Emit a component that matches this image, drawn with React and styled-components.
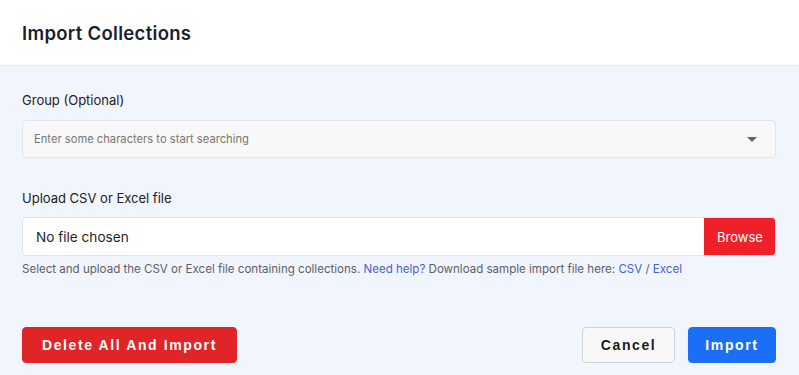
import React from "react";
import styled, { createGlobalStyle } from "styled-components";

const Global = createGlobalStyle`
  html, body { margin: 0; padding: 0; }
  body {
    width: 799px;
    height: 375px;
    overflow: hidden;
    background: #f1f5fe;
    font-family: "Inter", "Open Sans", sans-serif;
  }
`;

export default function App() {
  return (
    <Modal>
      <Global />
      <Header>
        <Title>Import Collections</Title>
      </Header>
      <Body>
        <Field>
          <Label>Group (Optional)</Label>
          <Select>
            <Placeholder>Enter some characters to start searching</Placeholder>
            <Caret />
          </Select>
        </Field>
        <Field>
          <Label tight>Upload CSV or Excel file</Label>
          <FileInput>
            <FileName>No file chosen</FileName>
            <Browse>Browse</Browse>
          </FileInput>
          <Help>
            Select and upload the CSV or Excel file containing collections.{" "}
            <Link>Need help?</Link> Download sample import file here:{" "}
            <Link>CSV</Link> / <Link>Excel</Link>
          </Help>
        </Field>
        <Footer>
          <Button variant="danger">Delete All And Import</Button>
          <Actions>
            <Button variant="light">Cancel</Button>
            <Button variant="primary">Import</Button>
          </Actions>
        </Footer>
      </Body>
    </Modal>
  );
}

const Modal = styled.div`
  width: 799px;
  height: 375px;
  display: flex;
  flex-direction: column;
  background: #f1f5fe;
`;

const Header = styled.div`
  height: 66px;
  background: #fff;
  border-bottom: 1px solid #e2e6ee;
  display: flex;
  align-items: center;
  padding: 0 22px;
  box-sizing: border-box;
`;

const Title = styled.h2`
  margin: 0;
  font-size: 18.5px;
  font-weight: 600;
  color: #1b1e2e;
  letter-spacing: 0.3px;
`;

const Body = styled.div`
  flex: 1;
  display: flex;
  flex-direction: column;
  padding: 26px 23px 12px 22px;
`;

const Field = styled.div`
  display: flex;
  flex-direction: column;
  margin-bottom: 32px;
  &:last-of-type { margin-bottom: 0; }
`;

const Label = styled.label`
  font-size: 13px;
  line-height: 16px;
  color: #222;
  margin-bottom: ${(p) => (p.tight ? "11px" : "12px")};
`;

const Select = styled.div`
  height: 38px;
  box-sizing: border-box;
  background: #f8f8f8;
  border: 1px solid #e1e4ec;
  border-radius: 4px;
  display: flex;
  align-items: center;
  justify-content: space-between;
  padding: 0 18px 0 11px;
`;

const Placeholder = styled.span`
  font-size: 11.2px;
  color: #777;
`;

const Caret = styled.span`
  width: 0;
  height: 0;
  border-left: 5px solid transparent;
  border-right: 5px solid transparent;
  border-top: 5px solid #666;
`;

const FileInput = styled.div`
  height: 39px;
  box-sizing: border-box;
  display: flex;
  background: #fff;
  border: 1px solid #dfe3ea;
  border-radius: 4px;
  overflow: hidden;
`;

const FileName = styled.span`
  flex: 1;
  display: flex;
  align-items: center;
  padding-left: 13px;
  font-size: 13.6px;
  color: #1e1e1e;
`;

const Browse = styled.span`
  width: 72px;
  display: flex;
  align-items: center;
  justify-content: center;
  background: #ef2028;
  color: #fff;
  font-size: 13px;
  margin: -1px -1px -1px 0;
`;

const Help = styled.p`
  margin: 6px 0 0;
  font-size: 11.55px;
  line-height: 14px;
  color: #5d6068;
`;

const Link = styled.a`
  color: #4a5fd3;
  text-decoration: none;
  cursor: pointer;
`;

const Footer = styled.div`
  margin-top: auto;
  display: flex;
  justify-content: space-between;
  align-items: center;
`;

const Actions = styled.div`
  display: flex;
  gap: 13px;
`;

const palette = {
  danger: { bg: "#e02428", fg: "#fff", border: "#e02428", pad: "19px" },
  primary: { bg: "#1a6ff6", fg: "#fff", border: "#1a6ff6", pad: "16.5px" },
  light: { bg: "#f8f8f8", fg: "#1b1b1b", border: "#cfd2d8", pad: "17.5px" },
};

const Button = styled.button`
  height: 36px;
  padding: 0 ${(p) => palette[p.variant].pad};
  border-radius: 4px;
  border: 1px solid ${(p) => palette[p.variant].border};
  background: ${(p) => palette[p.variant].bg};
  color: ${(p) => palette[p.variant].fg};
  font-family: "Liberation Sans", Arial, sans-serif;
  font-weight: 700;
  font-size: 14px;
  letter-spacing: 1.6px;
  cursor: pointer;
`;
